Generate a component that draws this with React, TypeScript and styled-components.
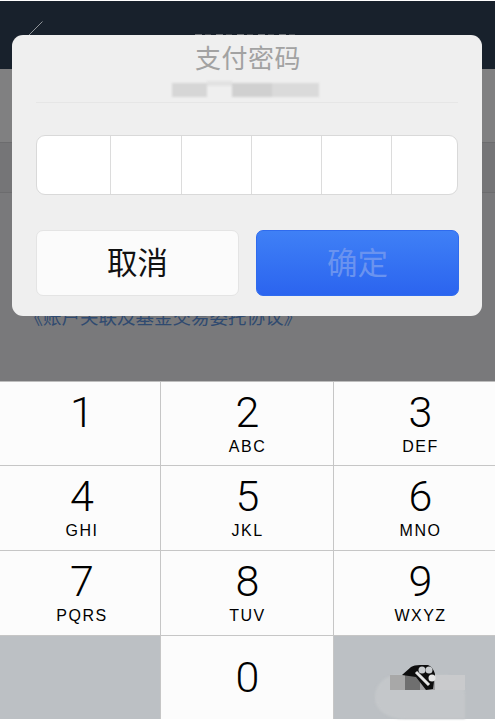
import React from 'react';
import styled, { createGlobalStyle } from 'styled-components';

const GlobalStyle = createGlobalStyle`
  html, body {
    margin: 0;
    padding: 0;
    background: #fff;
  }
  * {
    box-sizing: border-box;
  }
`;

const FONT = `"Liberation Sans", "Noto Sans CJK SC", sans-serif`;

const Screen = styled.div`
  position: relative;
  width: 495px;
  height: 723px;
  overflow: hidden;
  font-family: ${FONT};
  padding-top: 1px;
  background: #fff;
`;

const NavBar = styled.div`
  height: 68px;
  background: #18212c;
  display: grid;
  grid-template-columns: 1fr 105px 1fr;
  padding: 20px 27px 0;
`;

/* the nav title is hidden by the dialog, only its top edge shows */
const NavTitleEdge = styled.div`
  height: 1px;
  margin-top: 13px;
  background: repeating-linear-gradient(90deg, #6d7176 0 7px, #18212c 7px 10px, #4c5157 10px 16px, #18212c 16px 21px);
`;

const Page = styled.div`
  height: 312px;
  background: #79797b;
  display: flex;
  flex-direction: column;
`;

const PageRow = styled.div`
  height: 74px;
  border-bottom: 1px solid #6c6c6e;
  background: #808081;

  & + & {
    height: 50px;
    background: #757577;
  }
`;

const AgreementLink = styled.div`
  margin-top: 113px;
  padding-left: 24.5px;
  font-size: 18.5px;
  line-height: 24px;
  color: #2f4a70;
  white-space: nowrap;
`;

const Dialog = styled.div`
  position: absolute;
  left: 12px;
  top: 35px;
  width: 470px;
  height: 281px;
  background: #efefef;
  border-radius: 11px;
  padding: 8px 24px 0;
`;

const Title = styled.div`
  text-align: center;
  font-size: 26px;
  letter-spacing: 0.5px;
  line-height: 32px;
  padding-left: 2px;
  color: #a2a2a2;
`;

const Masked = styled.div`
  display: flex;
  height: 20px;
  margin: 5px 0 0 136px;
  width: 147px;
  filter: blur(1.2px);
`;

const MaskBlock = styled.div<{ $w: number; $shade: string }>`
  width: ${(p) => p.$w}px;
  height: ${(p) => (p.$w > 30 ? 14 : 5)}px;
  margin-top: ${(p) => (p.$w > 30 ? 3 : 1)}px;
  background: ${(p) => p.$shade};
`;

const Divider = styled.div`
  height: 1px;
  margin-top: 2px;
  background: #e6e6e6;
`;

const CodeBox = styled.div`
  display: grid;
  grid-template-columns: 73px 71px 70px 70px 70px 1fr;
  width: 422px;
  height: 60px;
  margin-top: 32px;
  background: #fff;
  border: 1px solid #d9d9d9;
  border-radius: 9px;
  overflow: hidden;
`;

const CodeCell = styled.div`
  border-left: 1px solid #dcdcdc;

  &:first-child {
    border-left: none;
  }
`;

const Actions = styled.div`
  display: flex;
  justify-content: space-between;
  margin: 35px -1px 0 0;
`;

const ActionButton = styled.div<{ $primary?: boolean }>`
  width: 203px;
  height: 66px;
  border-radius: 7px;
  display: flex;
  align-items: center;
  justify-content: center;
  font-size: 30.5px;
  padding-bottom: 4px;
  color: ${(p) => (p.$primary ? '#6a93ef' : '#111')};
  background: ${(p) => (p.$primary ? 'linear-gradient(#3f80f6, #2b64ef)' : '#fbfbfb')};
  border: 1px solid ${(p) => (p.$primary ? '#2f6bee' : '#e4e4e4')};
`;

const Keypad = styled.div`
  display: grid;
  grid-template-columns: 161px 173px 161px;
  grid-template-rows: 84px 85px 85px 83px;
  background: #fff;
  border-top: 1px solid #bdbdbd;
`;

const Key = styled.div<{ $dark?: boolean }>`
  display: flex;
  flex-direction: column;
  align-items: center;
  background: ${(p) => (p.$dark ? '#bcc0c4' : '#fcfcfc')};
  border-right: 1px solid #c6c6c6;
  border-bottom: 1px solid #c6c6c6;
  padding-top: 8px;
  color: #000;

  &:nth-child(3n + 1) {
    padding-left: 4px;
  }
  &:nth-child(3n + 2) {
    padding-left: 1px;
  }
  &:nth-child(3n) {
    border-right: none;
    padding-left: 12px;
  }
  &:nth-child(n + 10) {
    border-bottom: none;
  }
`;

const ZeroKey = styled(Key)`
  padding-top: 19px;
`;

const Digit = styled.div`
  font-family: Roboto, "Liberation Sans", sans-serif;
  font-weight: 300;
  font-size: 43px;
  line-height: 45px;
  height: 45px;
`;

const Letters = styled.div`
  font-size: 16px;
  line-height: 20px;
  letter-spacing: 1.5px;
  margin-top: 2px;
`;

const DeleteKey = styled(Key)`
  position: relative;
  padding: 0;
`;

const Smudge = styled.div`
  position: absolute;
  left: 41px;
  top: 39px;
  width: 90px;
  height: 44px;
  background: #c4c7ca;
  border-radius: 22px 20px 0 30px / 22px 20px 0 20px;
  filter: blur(1px);
`;

const BlurRow = styled.div`
  display: flex;
  position: absolute;
  left: 56px;
  top: 39px;
`;

const BlurCell = styled.div<{ $shade: string; $w: number }>`
  width: ${(p) => p.$w}px;
  height: 15px;
  background: ${(p) => p.$shade};
`;

const BackIcon = () => (
  <svg width="16" height="17" viewBox="0 0 16 17">
    <path d="M15.5 0.5 L0.5 15.5" stroke="#8f9498" strokeWidth="1" fill="none" />
  </svg>
);

const DeleteGlyph = () => (
  <svg width="34" height="26" viewBox="0 0 34 26" style={{ position: 'absolute', left: 68, top: 29 }}>
    <path d="M0 10 L9 2 Q12 0 18 0 L26 0 Q31 2 33 9 L31 24 L24 25 L14 12 L0 10 Z" fill="#0d0d0d" />
    <circle cx="20" cy="5" r="3.5" fill="#c9cccf" />
    <circle cx="27" cy="5" r="3.5" fill="#c9cccf" />
    <circle cx="30" cy="13" r="3.5" fill="#e6e6e6" />
    <path d="M14 7 L27 20" stroke="#e6e6e6" strokeWidth="3" />
  </svg>
);

const keys = [
  { d: '1', l: '' },
  { d: '2', l: 'ABC' },
  { d: '3', l: 'DEF' },
  { d: '4', l: 'GHI' },
  { d: '5', l: 'JKL' },
  { d: '6', l: 'MNO' },
  { d: '7', l: 'PQRS' },
  { d: '8', l: 'TUV' },
  { d: '9', l: 'WXYZ' },
];

const App: React.FC = () => {
  return (
    <Screen>
      <GlobalStyle />
      <NavBar>
        <BackIcon />
        <NavTitleEdge />
      </NavBar>
      <Page>
        <PageRow />
        <PageRow />
        <AgreementLink>《账户关联及基金交易委托协议》</AgreementLink>
      </Page>
      <Keypad>
        {keys.map((k) => (
          <Key key={k.d}>
            <Digit>{k.d}</Digit>
            {k.l && <Letters>{k.l}</Letters>}
          </Key>
        ))}
        <Key $dark />
        <ZeroKey>
          <Digit>0</Digit>
        </ZeroKey>
        <DeleteKey $dark>
          <Smudge />
          <BlurRow>
            <BlurCell $w={15} $shade="#a8a8a8" />
            <BlurCell $w={15} $shade="#6f6f6f" />
            <BlurCell $w={15} $shade="#a0a0a2" />
            <BlurCell $w={30} $shade="#c9cacc" />
          </BlurRow>
          <DeleteGlyph />
        </DeleteKey>
      </Keypad>
      <Dialog>
        <Title>支付密码</Title>
        <Masked>
          <MaskBlock $w={35} $shade="#d6d6d6" />
          <MaskBlock $w={25} $shade="#e2e2e2" />
          <MaskBlock $w={40} $shade="#d0d0d0" />
          <MaskBlock $w={47} $shade="#dadada" />
        </Masked>
        <Divider />
        <CodeBox>
          {[0, 1, 2, 3, 4, 5].map((i) => (
            <CodeCell key={i} />
          ))}
        </CodeBox>
        <Actions>
          <ActionButton>取消</ActionButton>
          <ActionButton $primary>确定</ActionButton>
        </Actions>
      </Dialog>
    </Screen>
  );
};

export default App;
